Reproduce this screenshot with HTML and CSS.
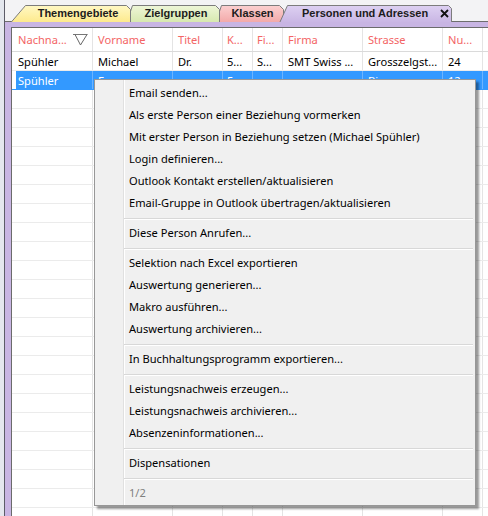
FILE: index.html
```html
<!DOCTYPE html>
<html lang="de">
<head>
    <meta charset="UTF-8">
    <title>Personen und Adressen</title>
    <link rel="stylesheet" href="styles.css">
</head>
<body>
    <svg class="defs" width="0" height="0">
        <defs>
            <linearGradient id="gYellow" x1="0" y1="0" x2="0" y2="1">
                <stop offset="0" stop-color="#fff8c4"/>
                <stop offset="1" stop-color="#fde98a"/>
            </linearGradient>
            <linearGradient id="gGreen" x1="0" y1="0" x2="0" y2="1">
                <stop offset="0" stop-color="#eef6d8"/>
                <stop offset="1" stop-color="#d6e8ad"/>
            </linearGradient>
            <linearGradient id="gPink" x1="0" y1="0" x2="0" y2="1">
                <stop offset="0" stop-color="#fbd0d0"/>
                <stop offset="1" stop-color="#f2a7a7"/>
            </linearGradient>
            <linearGradient id="gPurple" x1="0" y1="0" x2="0" y2="1">
                <stop offset="0" stop-color="#ddd0f2"/>
                <stop offset="1" stop-color="#c8b5e3"/>
            </linearGradient>
        </defs>
    </svg>

    <div class="window">
        <div class="tabbar">
            <div class="tab tab-1">
                <svg class="tab-shape" width="121" height="17" viewBox="0 0 121 17"><polygon points="0.5,18 15.5,0.5 116.5,0.5 120.5,4.5 120.5,18" fill="url(#gYellow)"/></svg>
                <span class="tab-label">Themengebiete</span>
            </div>
            <div class="tab tab-2">
                <svg class="tab-shape" width="94" height="17" viewBox="0 0 94 17"><polygon points="0.5,18 6.5,0.5 89.5,0.5 93.5,4.5 93.5,18" fill="url(#gGreen)"/></svg>
                <span class="tab-label">Zielgruppen</span>
            </div>
            <div class="tab tab-3">
                <svg class="tab-shape" width="69" height="17" viewBox="0 0 69 17"><polygon points="0.5,18 6.5,0.5 64.5,0.5 68.5,4.5 68.5,18" fill="url(#gPink)"/></svg>
                <span class="tab-label">Klassen</span>
            </div>
            <div class="tab tab-4 active">
                <svg class="tab-shape" width="173" height="17" viewBox="0 0 173 17"><polygon points="0.5,18 8.5,0.5 169.5,0.5 172.5,3.5 172.5,18" fill="url(#gPurple)"/></svg>
                <span class="tab-label">Personen und Adressen</span>
                <svg class="tab-close" width="9" height="9" viewBox="0 0 9 9"><path d="M1 1 L8 8 M8 1 L1 8" stroke="#111" stroke-width="1.8"/></svg>
            </div>
        </div>

        <div class="frame">
            <div class="grid">
                <div class="row head">
                    <div class="cell c1">Nachna...
                        <svg class="filter" width="15" height="13" viewBox="0 0 15 13"><path d="M0 1.5 H14.5" stroke="#777" stroke-width="1"/><path d="M2 1.5 L7.5 12 L14 1.5" fill="none" stroke="#666" stroke-width="1"/></svg>
                    </div>
                    <div class="cell c2">Vorname</div>
                    <div class="cell c3">Titel</div>
                    <div class="cell c4">K...</div>
                    <div class="cell c5">Fi...</div>
                    <div class="cell c6">Firma</div>
                    <div class="cell c7">Strasse</div>
                    <div class="cell c8">Nu...</div>
                    <div class="cell c9"></div>
                </div>
                <div class="row">
                    <div class="cell c1">Spühler</div>
                    <div class="cell c2">Michael</div>
                    <div class="cell c3">Dr.</div>
                    <div class="cell c4">5...</div>
                    <div class="cell c5">S...</div>
                    <div class="cell c6">SMT Swiss ...</div>
                    <div class="cell c7">Grosszelgst...</div>
                    <div class="cell c8">24</div>
                    <div class="cell c9"></div>
                </div>
                <div class="row selected">
                    <div class="cell c1">Spühler</div>
                    <div class="cell c2">F...</div>
                    <div class="cell c3"></div>
                    <div class="cell c4">5...</div>
                    <div class="cell c5"></div>
                    <div class="cell c6"></div>
                    <div class="cell c7">Bi...</div>
                    <div class="cell c8">12</div>
                    <div class="cell c9"></div>
                </div>
                <div class="filler"></div>
            </div>
        </div>
    </div>

    <div class="menu">
        <div class="item">Email senden...</div>
        <div class="item">Als erste Person einer Beziehung vormerken</div>
        <div class="item">Mit erster Person in Beziehung setzen (Michael Spühler)</div>
        <div class="item">Login definieren...</div>
        <div class="item">Outlook Kontakt erstellen/aktualisieren</div>
        <div class="item">Email-Gruppe in Outlook übertragen/aktualisieren</div>
        <div class="sep"></div>
        <div class="item">Diese Person Anrufen...</div>
        <div class="sep"></div>
        <div class="item">Selektion nach Excel exportieren</div>
        <div class="item">Auswertung generieren...</div>
        <div class="item">Makro ausführen...</div>
        <div class="item">Auswertung archivieren...</div>
        <div class="sep"></div>
        <div class="item">In Buchhaltungsprogramm exportieren...</div>
        <div class="sep"></div>
        <div class="item">Leistungsnachweis erzeugen...</div>
        <div class="item">Leistungsnachweis archivieren...</div>
        <div class="item">Absenzeninformationen...</div>
        <div class="sep"></div>
        <div class="item">Dispensationen</div>
        <div class="sep"></div>
        <div class="item page">1/2</div>
    </div>
</body>
</html>
```

FILE: styles.css
```css
html, body {
    margin: 0;
    height: 100%;
}

body {
    background: #e4e7ee;
    font-family: "Noto Sans", "Liberation Sans", sans-serif;
    font-size: 11.1px;
    color: #000;
    overflow: hidden;
}

.defs {
    position: absolute;
}

.window {
    margin-left: 4px;
    height: 516px;
    border-left: 1px solid #5c5c68;
    display: flex;
    flex-direction: column;
    background: #f3f3f5;
}

/* tabs */
.tabbar {
    height: 22px;
    box-sizing: border-box;
    padding: 5px 0 0 5px;
    display: flex;
    background: linear-gradient(to top, #6e6e6e 0, #6e6e6e 1px, transparent 1px);
}

.tab {
    position: relative;
    height: 17px;
    box-sizing: border-box;
    display: flex;
    align-items: center;
    justify-content: center;
    font-family: "Liberation Sans", Arial, sans-serif;
    font-weight: bold;
    font-size: 11px;
    color: #1c1c1c;
    white-space: nowrap;
}

.tab-shape {
    position: absolute;
    left: 0;
    top: 0;
}

.tab-shape polygon {
    stroke: #7c7c7c;
    stroke-width: 1;
}

.tab-label {
    position: relative;
    line-height: 17px;
}

.tab-1 { width: 121px; padding-left: 15px; z-index: 3; }
.tab-2 { width: 94px; padding-left: 6px; margin-left: -5px; z-index: 2; }
.tab-3 { width: 69px; padding-left: 6px; margin-left: -5px; z-index: 1; }
.tab-4 {
    width: 173px;
    margin-left: -5px;
    z-index: 4;
    padding-left: 23px;
    justify-content: flex-start;
    gap: 12px;
}

.tab-close {
    position: relative;
}

/* frame + grid */
.frame {
    flex: 1;
    display: flex;
    background: #c8b5e3;
    padding: 5px 0 0 6px;
    min-height: 0;
}

.grid {
    flex: 1;
    display: flex;
    flex-direction: column;
    background: #fff;
    border-top: 1px solid #6b6b6b;
    border-left: 1px solid #6b6b6b;
}

.row {
    display: flex;
    height: 19px;
    border-bottom: 1px solid #ebebeb;
    box-sizing: border-box;
}

.row.head {
    height: 24px;
    border-bottom: 1px solid #dadada;
    color: #f36565;
}

.cell {
    box-sizing: border-box;
    border-right: 1px solid #e4e4e4;
    padding-left: 5px;
    white-space: nowrap;
    overflow: hidden;
    display: flex;
    align-items: center;
}

.c1 { width: 81px; padding-left: 6px; }
.c2 { width: 80px; }
.c3 { width: 50px; }
.c4 { width: 30px; padding-left: 4px; }
.c5 { width: 30px; padding-left: 4px; }
.c6 { width: 80px; }
.c7 { width: 80px; }
.c8 { width: 40px; }
.c9 { flex: 1; border-right: none; }

.filter {
    margin-left: auto;
    margin-right: 4px;
}

.row.selected {
    border-bottom-color: #3399ff;
}

.row.selected .cell {
    background: #3399ff;
    color: #fff;
    border-right-color: #6cb4ff;
}

.row.selected .c1 {
    border-left: 4px solid #fff;
    padding-left: 2px;
}

.filler {
    flex: 1;
    background-image:
        repeating-linear-gradient(to bottom, transparent 0, transparent 18px, #ebebeb 18px, #ebebeb 19px),
        linear-gradient(to right,
            transparent 80px, #e4e4e4 80px, #e4e4e4 81px,
            transparent 81px, transparent 160px, #e4e4e4 160px, #e4e4e4 161px,
            transparent 161px, transparent 210px, #e4e4e4 210px, #e4e4e4 211px,
            transparent 211px, transparent 240px, #e4e4e4 240px, #e4e4e4 241px,
            transparent 241px, transparent 270px, #e4e4e4 270px, #e4e4e4 271px,
            transparent 271px, transparent 350px, #e4e4e4 350px, #e4e4e4 351px,
            transparent 351px, transparent 430px, #e4e4e4 430px, #e4e4e4 431px,
            transparent 431px, transparent 470px, #e4e4e4 470px, #e4e4e4 471px,
            transparent 471px);
}

/* context menu */
.menu {
    position: absolute;
    left: 94px;
    top: 79px;
    width: 382px;
    box-sizing: border-box;
    padding: 2px 2px 1px 2px;
    background-color: #f0f0f0;
    background-image: linear-gradient(to right,
        transparent 28px, #e0e0e0 28px, #e0e0e0 29px,
        #fff 29px, #fff 30px, transparent 30px);
    border: 1px solid #979797;
    box-shadow: 3px 3px 2px rgba(0, 0, 0, 0.4);
}

.item {
    height: 22px;
    line-height: 22px;
    padding-left: 32px;
    white-space: nowrap;
}

.item.page {
    color: #808080;
}

.sep {
    margin: 4px 0 2px 27px;
    border-top: 1px solid #d8d8d8;
    border-bottom: 1px solid #fff;
}
```
